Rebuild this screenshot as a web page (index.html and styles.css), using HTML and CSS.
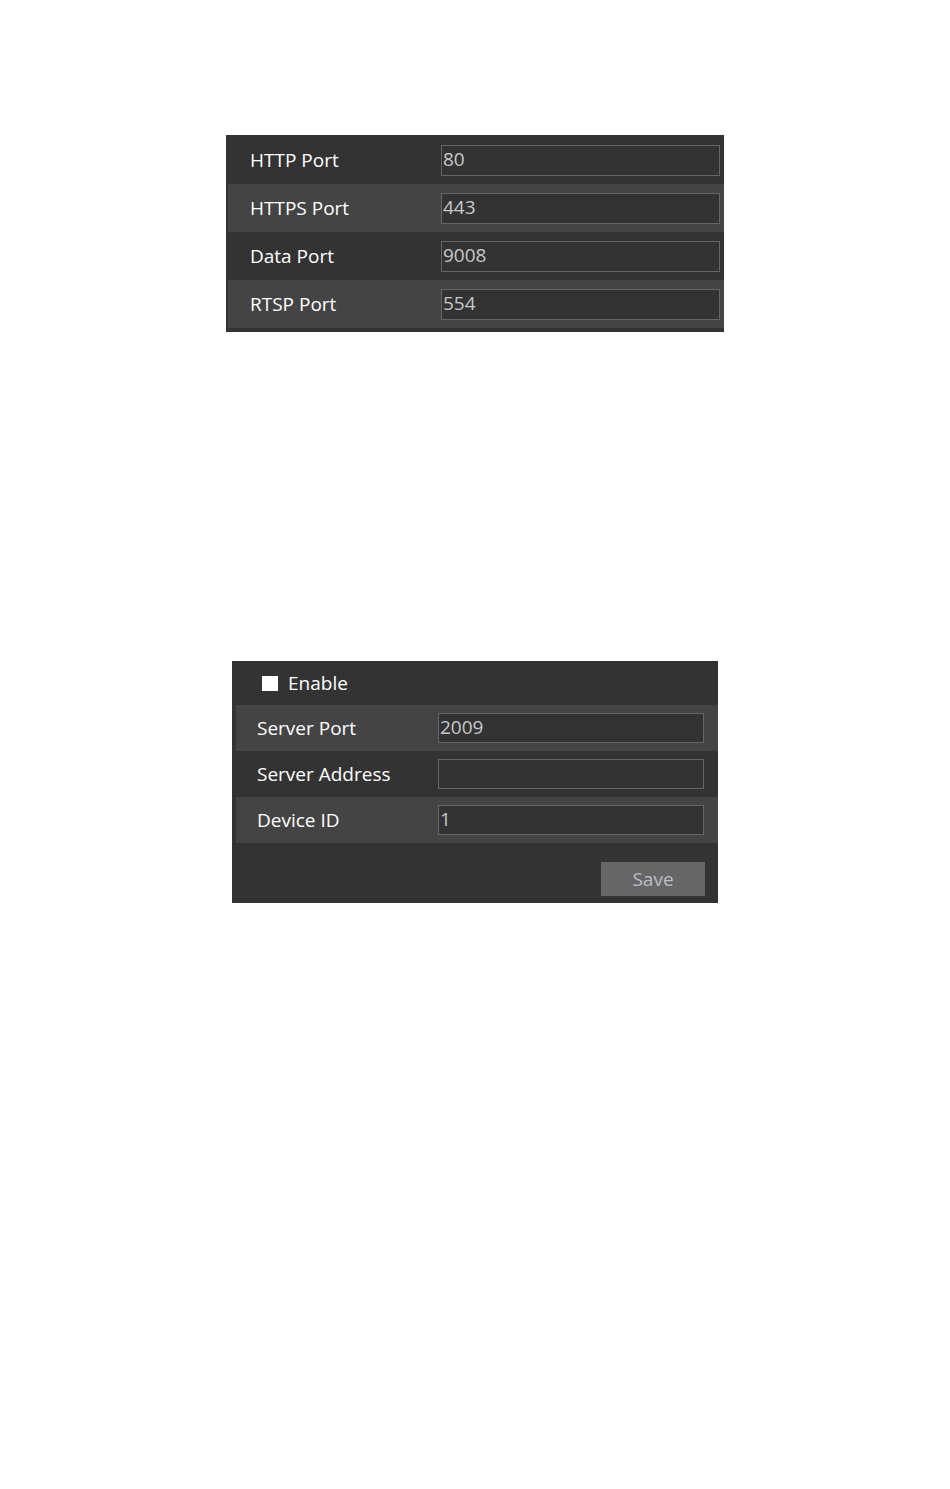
FILE: index.html
```html
<!DOCTYPE html>
<html lang="en">
<head>
    <meta charset="UTF-8">
    <meta name="viewport" content="width=device-width, initial-scale=1.0">
    <title>Network Settings</title>
    <link rel="stylesheet" href="styles.css">
</head>
<body>

<div class="panel port-panel">
    <div class="row">
        <label class="label" for="httpPort">HTTP Port</label>
        <input class="field" type="text" id="httpPort" value="80">
    </div>
    <div class="row alt">
        <label class="label" for="httpsPort">HTTPS Port</label>
        <input class="field" type="text" id="httpsPort" value="443">
    </div>
    <div class="row">
        <label class="label" for="dataPort">Data Port</label>
        <input class="field" type="text" id="dataPort" value="9008">
    </div>
    <div class="row alt">
        <label class="label" for="rtspPort">RTSP Port</label>
        <input class="field" type="text" id="rtspPort" value="554">
    </div>
</div>

<div class="panel server-panel">
    <div class="enable-row">
        <span class="check"></span>
        <span class="enable-text">Enable</span>
    </div>
    <div class="row alt">
        <label class="label" for="serverPort">Server Port</label>
        <input class="field" type="text" id="serverPort" value="2009">
    </div>
    <div class="row">
        <label class="label" for="serverAddress">Server Address</label>
        <input class="field" type="text" id="serverAddress" value="">
    </div>
    <div class="row alt">
        <label class="label" for="deviceId">Device ID</label>
        <input class="field" type="text" id="deviceId" value="1">
    </div>
    <div class="actions">
        <button class="save" type="button">Save</button>
    </div>
</div>

</body>
</html>
```

FILE: styles.css
```css
body {
    margin: 0;
    background-color: #fff;
    font-family: 'Open Sans', 'Noto Sans', sans-serif;
}

.panel {
    background-color: #333;
}

/* top table: ports */
.port-panel {
    width: 496px;
    margin: 135px 0 0 226px;
    padding: 1px 0 4px 2px;
}

.row {
    display: flex;
    align-items: center;
    height: 48px;
}

.row.alt {
    background-color: #444;
}

.label {
    color: #fff;
    font-size: 19px;
    box-sizing: border-box;
    padding-left: 22px;
    width: 213px;
    flex-shrink: 0;
}

.field {
    box-sizing: border-box;
    width: 279px;
    height: 31px;
    margin: 0;
    padding: 0 2px 2px 1px;
    border: 1px solid #666;
    background-color: #333;
    color: #c8c8c8;
    font-family: inherit;
    font-size: 19px;
    outline: none;
}

/* bottom table: server */
.server-panel {
    width: 482px;
    margin: 329px 0 0 232px;
    padding: 0 0 7px 4px;
}

.enable-row {
    display: flex;
    align-items: center;
    height: 44px;
    margin-left: -4px;
    padding-left: 30px;
}

.check {
    width: 16px;
    height: 15px;
    background-color: #fff;
    margin-right: 10px;
}

.enable-text {
    color: #fff;
    font-size: 19px;
}

.server-panel .row {
    height: 46px;
}

.server-panel .label {
    padding-left: 21px;
    width: 202px;
}

.server-panel .field {
    width: 266px;
    height: 30px;
}

.actions {
    display: flex;
    justify-content: flex-end;
    padding: 19px 13px 0 0;
}

.save {
    width: 104px;
    height: 34px;
    border: none;
    background-color: #666;
    color: #b8c0c8;
    font-family: inherit;
    font-size: 19px;
    cursor: pointer;
}
```
